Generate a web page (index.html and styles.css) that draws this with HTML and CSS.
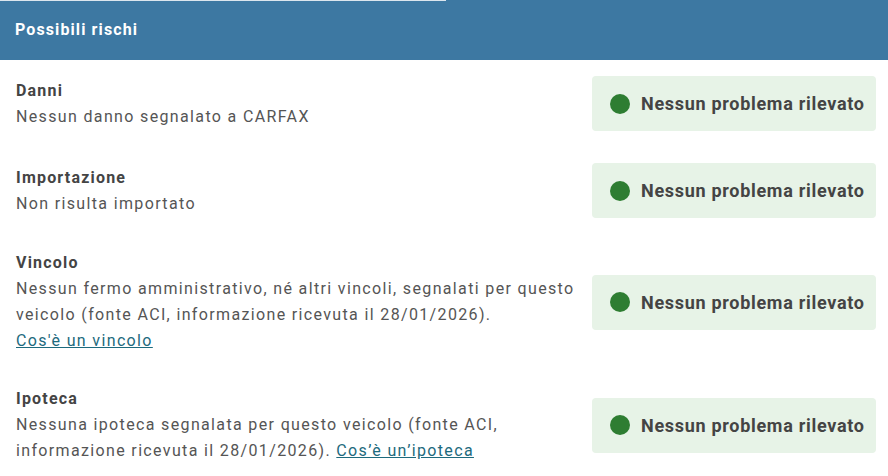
FILE: index.html
```html
<!DOCTYPE html>
<html lang="it">
<head>
    <meta charset="UTF-8">
    <meta name="viewport" content="width=device-width, initial-scale=1.0">
    <title>Possibili rischi</title>
    <link rel="stylesheet" href="styles.css">
</head>
<body>
    <div class="risk-panel">
        <div class="panel-header">
            <div class="header-progress"></div>
            <h2>Possibili rischi</h2>
        </div>

        <div class="risk-list">
            <div class="risk-row">
                <div class="risk-info">
                    <h3>Danni</h3>
                    <p>Nessun danno segnalato a CARFAX</p>
                </div>
                <div class="status-badge">
                    <span class="status-dot"></span>
                    <span>Nessun problema rilevato</span>
                </div>
            </div>

            <div class="risk-row">
                <div class="risk-info">
                    <h3>Importazione</h3>
                    <p>Non risulta importato</p>
                </div>
                <div class="status-badge">
                    <span class="status-dot"></span>
                    <span>Nessun problema rilevato</span>
                </div>
            </div>

            <div class="risk-row">
                <div class="risk-info">
                    <h3>Vincolo</h3>
                    <p>Nessun fermo amministrativo, né altri vincoli, segnalati per questo veicolo (fonte ACI, informazione ricevuta il 28/01/2026).<br><a href="#">Cos'è un vincolo</a></p>
                </div>
                <div class="status-badge">
                    <span class="status-dot"></span>
                    <span>Nessun problema rilevato</span>
                </div>
            </div>

            <div class="risk-row">
                <div class="risk-info">
                    <h3>Ipoteca</h3>
                    <p>Nessuna ipoteca segnalata per questo veicolo (fonte ACI, informazione ricevuta il 28/01/2026). <a href="#">Cos’è un’ipoteca</a></p>
                </div>
                <div class="status-badge">
                    <span class="status-dot"></span>
                    <span>Nessun problema rilevato</span>
                </div>
            </div>
        </div>
    </div>
</body>
</html>
```

FILE: styles.css
```css
body {
    margin: 0;
    font-family: Roboto, "Noto Sans", sans-serif;
    background: #ffffff;
    color: #555555;
}

.risk-panel {
    width: 888px;
}

.panel-header {
    background-color: #3d78a2;
    height: 60px;
}

.header-progress {
    width: 446px;
    height: 1px;
    background-color: #dce6ee;
}

.panel-header h2 {
    margin: 0;
    padding: 18px 15px 0;
    font-size: 16px;
    line-height: 22px;
    font-weight: 700;
    color: #ffffff;
    letter-spacing: 1.1px;
}

.risk-list {
    padding-top: 16px;
}

.risk-row {
    display: flex;
    align-items: center;
    gap: 8px;
    padding: 0 12px 32px 16px;
}

.risk-info {
    flex: 1;
}

.risk-info h3 {
    margin: 0;
    font-size: 16px;
    line-height: 26px;
    font-weight: 700;
    color: #444444;
    letter-spacing: 1.2px;
}

.risk-info p {
    margin: 0;
    font-size: 16px;
    line-height: 26px;
    color: #555555;
    letter-spacing: 1.35px;
}

.risk-info a {
    color: #1d6a7d;
    text-decoration: underline;
}

.status-badge {
    display: flex;
    align-items: center;
    gap: 11px;
    width: 284px;
    height: 55px;
    box-sizing: border-box;
    padding-left: 18px;
    background-color: #e7f3e7;
    border-radius: 4px;
    font-size: 18px;
    font-weight: 700;
    color: #444444;
    letter-spacing: 0.7px;
    flex-shrink: 0;
}

.status-dot {
    width: 20px;
    height: 20px;
    border-radius: 50%;
    background-color: #2e7d32;
}
```
